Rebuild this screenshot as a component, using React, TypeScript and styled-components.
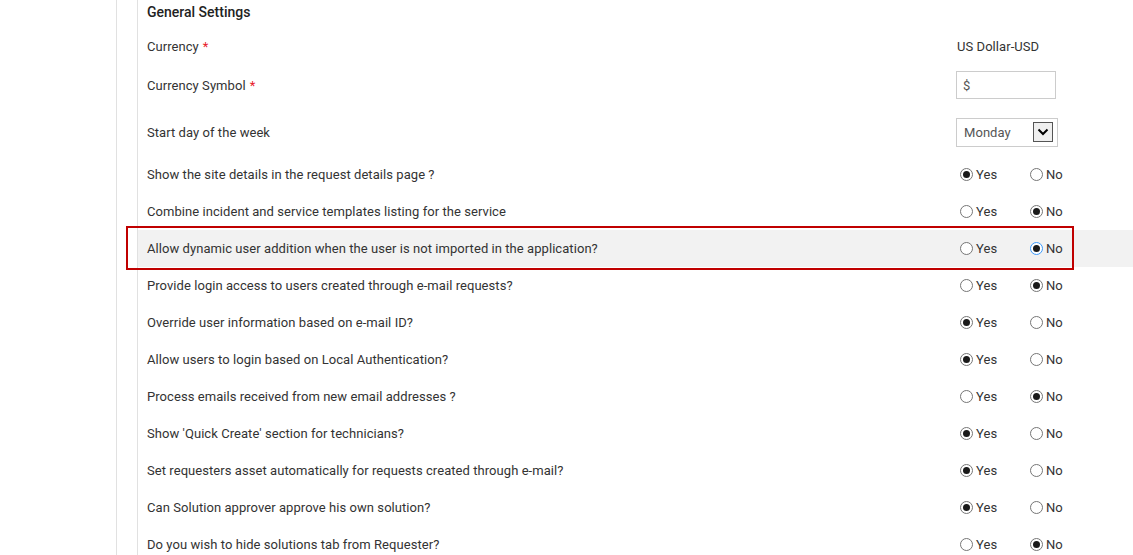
import React from "react";
import styled, { createGlobalStyle } from "styled-components";

const GlobalStyle = createGlobalStyle`
  html, body {
    margin: 0;
    padding: 0;
    background: #ffffff;
    overflow: hidden;
  }
  body {
    font-family: Roboto, "Liberation Sans", Arial, sans-serif;
    font-size: 13px;
    letter-spacing: 0.06px;
    color: #333333;
  }
`;

const Page = styled.div`
  display: flex;
  height: 555px;
  padding-left: 116px;
`;

const Gutter = styled.div`
  width: 20px;
  border-left: 1px solid #e1e1e1;
  border-right: 1px solid #e1e1e1;
  flex-shrink: 0;
`;

const Content = styled.div`
  flex: 1;
  display: flex;
  flex-direction: column;
`;

const Title = styled.div`
  height: 24px;
  line-height: 24px;
  padding-left: 9px;
  font-size: 14px;
  font-weight: 500;
  letter-spacing: 0;
  color: #222222;
`;

const Row = styled.div<{ $h: number; $pt?: number; $active?: boolean }>`
  position: relative;
  display: grid;
  grid-template-columns: 809px 1fr;
  align-items: center;
  flex-shrink: 0;
  box-sizing: border-box;
  height: ${(p) => p.$h}px;
  padding-top: ${(p) => p.$pt ?? 0}px;
  padding-left: 9px;
  background: ${(p) => (p.$active ? "#f2f2f2" : "transparent")};
`;

const Label = styled.div`
  color: #333333;
`;

const Required = styled.span`
  color: #e8202a;
  margin-left: 4px;
`;

const Value = styled.div`
  padding-left: 1px;
  color: #333333;
`;

const TextBox = styled.div`
  box-sizing: border-box;
  width: 100px;
  height: 28px;
  border: 1px solid #cccccc;
  padding-left: 6px;
  display: flex;
  align-items: center;
  color: #555555;
`;

const SelectBox = styled.div`
  box-sizing: border-box;
  width: 102px;
  height: 29px;
  border: 1px solid #cccccc;
  padding: 0 4px 0 7px;
  display: flex;
  align-items: center;
  justify-content: space-between;
  color: #555555;
`;

const ArrowButton = styled.div`
  box-sizing: border-box;
  width: 20px;
  height: 20px;
  border: 1px solid #555555;
  background: #efefef;
  display: flex;
  align-items: center;
  justify-content: center;
`;

const RadioGroup = styled.div`
  display: flex;
  padding-left: 4px;
`;

const Option = styled.label`
  display: flex;
  align-items: center;
  gap: 3px;
  width: 70px;
  color: #333333;
`;

const Circle = styled.span<{ $checked: boolean; $focus?: boolean }>`
  box-sizing: border-box;
  width: 13px;
  height: 13px;
  border-radius: 50%;
  border: 1px solid ${(p) => (p.$focus ? "#3b99fc" : "#767676")};
  background: #ffffff;
  display: flex;
  align-items: center;
  justify-content: center;

  &::after {
    content: "";
    width: 7px;
    height: 7px;
    border-radius: 50%;
    background: ${(p) => (p.$checked ? "#1a1a1a" : "transparent")};
  }
`;

const Marker = styled.div`
  position: absolute;
  left: -12px;
  top: -4px;
  width: 948px;
  height: 44px;
  box-sizing: border-box;
  border: 2px solid #c00000;
  pointer-events: none;
`;

type Setting = {
  label: string;
  yes: boolean;
  active?: boolean;
};

const settings: Setting[] = [
  { label: "Show the site details in the request details page ?", yes: true },
  { label: "Combine incident and service templates listing for the service", yes: false },
  {
    label: "Allow dynamic user addition when the user is not imported in the application?",
    yes: false,
    active: true,
  },
  { label: "Provide login access to users created through e-mail requests?", yes: false },
  { label: "Override user information based on e-mail ID?", yes: true },
  { label: "Allow users to login based on Local Authentication?", yes: true },
  { label: "Process emails received from new email addresses ?", yes: false },
  { label: "Show 'Quick Create' section for technicians?", yes: true },
  { label: "Set requesters asset automatically for requests created through e-mail?", yes: true },
  { label: "Can Solution approver approve his own solution?", yes: true },
  { label: "Do you wish to hide solutions tab from Requester?", yes: false },
];

const YesNo = ({ yes, focus }: { yes: boolean; focus?: boolean }) => (
  <RadioGroup>
    <Option>
      <Circle $checked={yes} />
      Yes
    </Option>
    <Option>
      <Circle $checked={!yes} $focus={focus} />
      No
    </Option>
  </RadioGroup>
);

const App = () => {
  return (
    <>
      <GlobalStyle />
      <Page>
        <Gutter />
        <Content>
          <Title>General Settings</Title>
          <Row $h={44}>
            <Label>
              Currency<Required>*</Required>
            </Label>
            <Value>US Dollar-USD</Value>
          </Row>
          <Row $h={34}>
            <Label>
              Currency Symbol<Required>*</Required>
            </Label>
            <TextBox>$</TextBox>
          </Row>
          <Row $h={54} $pt={6}>
            <Label>Start day of the week</Label>
            <SelectBox>
              Monday
              <ArrowButton>
                <svg width="12" height="8" viewBox="0 0 12 8">
                  <path d="M1.5 1.5 L6 6 L10.5 1.5" fill="none" stroke="#000" strokeWidth="2" />
                </svg>
              </ArrowButton>
            </SelectBox>
          </Row>
          {settings.map((s) => (
            <Row key={s.label} $h={37} $active={s.active}>
              <Label>{s.label}</Label>
              <YesNo yes={s.yes} focus={s.active} />
              {s.active && <Marker />}
            </Row>
          ))}
        </Content>
      </Page>
    </>
  );
};

export default App;
